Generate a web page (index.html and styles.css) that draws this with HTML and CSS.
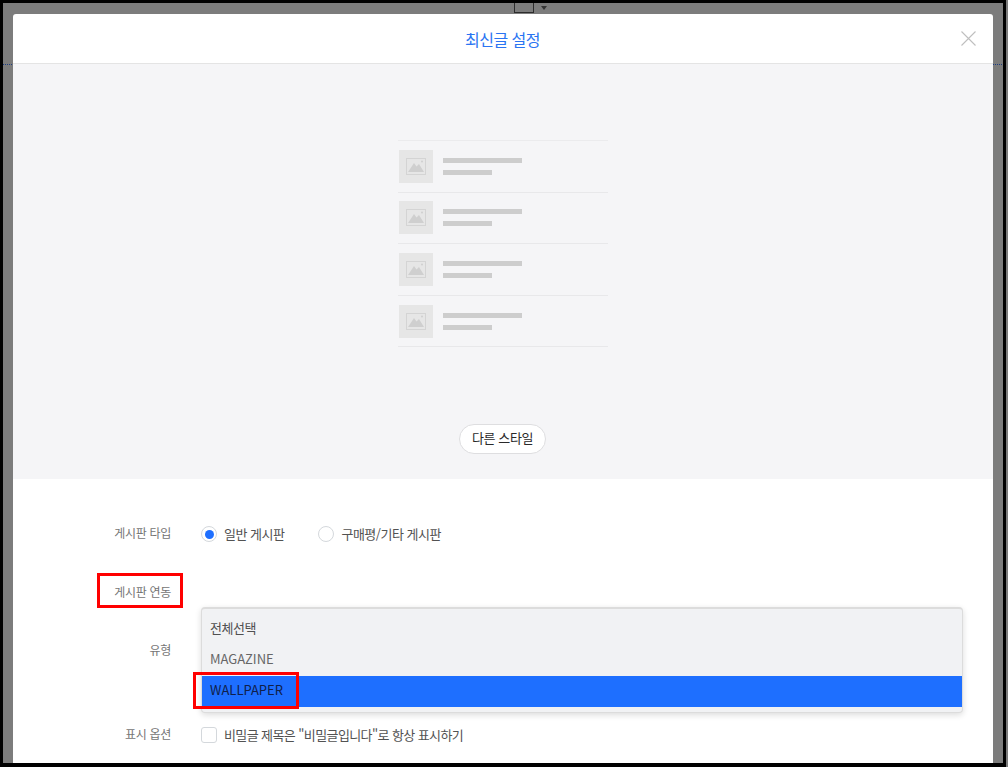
FILE: index.html
```html
<!DOCTYPE html>
<html lang="ko">
<head>
<meta charset="utf-8">
<title>최신글 설정</title>
<link rel="stylesheet" href="styles.css">
</head>
<body>
<div class="shot">
  <div class="toolbar-peek"><span class="peek-box"></span><span class="peek-caret"></span></div>
  <div class="guide"></div>
  <main class="modal">
    <header class="modal-head">
      <h1 class="modal-title">최신글 설정</h1>
      <svg class="close" width="15" height="15" viewBox="0 0 15 15"><path d="M.5.5l14 14M14.500.5l-14 14" fill="none" stroke="#bfbfbf" stroke-width="1.100"/></svg>
    </header>
    <section class="preview">
      <ul class="sample">
        <li class="sample-row"><span class="thumb"><svg width="20" height="17" viewBox="0 0 20 17"><rect x=".5" y=".5" width="19" height="16" fill="none" stroke="#d4d4d4"/><path d="M2 14l6-9 2.500 3.500L13 6l5 8z" fill="#cfcfcf"/><circle cx="16" cy="3.500" r="1" fill="#cfcfcf"/></svg></span><span class="lines"><i class="line long"></i><i class="line short"></i></span></li>
        <li class="sample-row"><span class="thumb"><svg width="20" height="17" viewBox="0 0 20 17"><rect x=".5" y=".5" width="19" height="16" fill="none" stroke="#d4d4d4"/><path d="M2 14l6-9 2.500 3.500L13 6l5 8z" fill="#cfcfcf"/><circle cx="16" cy="3.500" r="1" fill="#cfcfcf"/></svg></span><span class="lines"><i class="line long"></i><i class="line short"></i></span></li>
        <li class="sample-row"><span class="thumb"><svg width="20" height="17" viewBox="0 0 20 17"><rect x=".5" y=".5" width="19" height="16" fill="none" stroke="#d4d4d4"/><path d="M2 14l6-9 2.500 3.500L13 6l5 8z" fill="#cfcfcf"/><circle cx="16" cy="3.500" r="1" fill="#cfcfcf"/></svg></span><span class="lines"><i class="line long"></i><i class="line short"></i></span></li>
        <li class="sample-row"><span class="thumb"><svg width="20" height="17" viewBox="0 0 20 17"><rect x=".5" y=".5" width="19" height="16" fill="none" stroke="#d4d4d4"/><path d="M2 14l6-9 2.500 3.500L13 6l5 8z" fill="#cfcfcf"/><circle cx="16" cy="3.500" r="1" fill="#cfcfcf"/></svg></span><span class="lines"><i class="line long"></i><i class="line short"></i></span></li>
      </ul>
      <button class="style-btn" type="button">다른 스타일</button>
    </section>
    <form class="form">
      <div class="row row-type">
        <div class="label">게시판 타입</div>
        <div class="control options">
          <label class="opt"><span class="radio on"></span>일반 게시판</label>
          <label class="opt"><span class="radio"></span>구매평/기타 게시판</label>
        </div>
      </div>
      <div class="row row-link">
        <div class="label">게시판 연동</div>
      </div>
      <div class="row row-kind">
        <div class="label">유형</div>
      </div>
      <div class="row row-show">
        <div class="label">표시 옵션</div>
        <label class="opt"><span class="check"></span>비밀글 제목은 "비밀글입니다"로 항상 표시하기</label>
      </div>
      <div class="menu">
        <div class="menu-item ko">전체선택</div>
        <div class="menu-item">MAGAZINE</div>
        <div class="menu-item selected">WALLPAPER</div>
      </div>
      <div class="mark mark-label"></div>
      <div class="mark mark-item"></div>
    </form>
  </main>
</div>
</body>
</html>
```
FILE: styles.css
```css
* { box-sizing: border-box; }
html, body { margin: 0; padding: 0; height: 100%; overflow: hidden; }
body {
  width: 1008px;
  height: 767px;
  background: #7c7c7c;
  font-family: "Noto Sans CJK KR", "Noto Sans", sans-serif;
}
.shot {
  position: relative;
  width: 1006px;
  height: 767px;
  border: solid #000;
  border-width: 3px 3px 4px 3px;
  background: #7c7c7c;
  padding: 11px 10px 0 10px;
  overflow: hidden;
}
.toolbar-peek {
  position: absolute;
  left: 511px;
  top: 0;
  display: flex;
  align-items: center;
  gap: 7px;
}
.peek-box {
  width: 20px;
  height: 10px;
  border: 1px solid #2c2c2c;
  border-top: 0;
}
.peek-caret {
  width: 0;
  height: 0;
  border: 3.500px solid transparent;
  border-top: 4px solid #333;
  border-bottom-width: 0;
  margin-top: 0;
}
.guide {
  position: absolute;
  left: 0;
  right: -3px;
  top: 61px;
  border-top: 1px dotted #1d3d80;
}
.modal {
  position: relative;
  width: 980px;
  height: 760px;
  background: #fff;
  border-radius: 3px 3px 0 0;
}
.modal-head {
  position: relative;
  height: 50px;
  border-bottom: 1px solid #e4e4e4;
  display: flex;
  align-items: center;
  justify-content: center;
}
.modal-title {
  margin: 0 1px 0 0;
  font-size: 16px;
  font-weight: 400;
  letter-spacing: -.5px;
  color: #2a74f2;
  line-height: 50px;
}
.close { position: absolute; right: 17px; top: 17px; }
.preview {
  height: 415px;
  background: #f5f5f7;
  position: relative;
  display: flex;
  flex-direction: column;
  align-items: center;
  padding-top: 76px;
}
.sample {
  list-style: none;
  margin: 0;
  padding: 0;
  width: 210px;
  border-top: 1px solid #ebebed;
  filter: blur(.3px);
}
.sample-row {
  height: 51.600px;
  display: flex;
  align-items: center;
  gap: 10px;
  padding-left: 1px;
  border-bottom: 1px solid #e8e8ea;
}
.thumb {
  width: 34px;
  height: 33px;
  background: #e6e6e6;
  display: flex;
  align-items: center;
  justify-content: center;
}
.lines { display: flex; flex-direction: column; gap: 7px; }
.line { display: block; height: 5px; background: #cdcdcd; }
.line.long { width: 79px; }
.line.short { width: 49px; }
.style-btn {
  position: absolute;
  left: 446px;
  top: 360px;
  width: 87px;
  height: 30px;
  padding: 0 0 4px;
  background: #fff;
  border: 1px solid #dedee0;
  border-radius: 15px;
  font: 400 13px "Noto Sans CJK KR", sans-serif;
  letter-spacing: -.4px;
  color: #2a2a2a;
}
.form {
  position: relative;
  padding-top: 45px;
  font-size: 13px;
  color: #525252;
}
.row { display: flex; align-items: flex-start; }
.label {
  width: 158px;
  text-align: right;
  font-size: 12px;
  letter-spacing: -.3px;
  line-height: 18px;
  color: #757575;
}
.row-type { height: 59px; }
.row-link { height: 58px; }
.row-kind { height: 84px; }
.control { display: flex; }
.options { gap: 34px; margin-left: 30px; }
.opt {
  display: flex;
  align-items: center;
  gap: 7px;
  height: 20px;
  line-height: 20px;
  letter-spacing: -.5px;
}
.row-show .opt { margin-left: 30px; letter-spacing: -.6px; }
.radio, .check {
  width: 16px;
  height: 16px;
  border: 1px solid #d4d8dc;
  background: #fff;
  flex: none;
}
.radio { border-radius: 50%; position: relative; }
.radio.on::after {
  content: "";
  position: absolute;
  left: 2.500px;
  top: 2.500px;
  width: 9px;
  height: 9px;
  border-radius: 50%;
  background: #1e6fff;
}
.check { border-radius: 3px; }
.menu {
  position: absolute;
  left: 188px;
  top: 128px;
  width: 762px;
  height: 106px;
  padding-top: 5px;
  background: #f1f2f4;
  border: 1px solid #dcdcdc;
  border-top-width: 2px;
  border-radius: 4px;
  box-shadow: 0 2px 6px rgba(0,0,0,.14);
}
.menu-item {
  height: 31px;
  padding-left: 8px;
  line-height: 28px;
  font-size: 13px;
  color: #666;
}
.menu-item.ko { letter-spacing: -.5px; color: #505050; }
.menu-item.selected { background: #1e6fff; color: #10204a; }
.mark { position: absolute; border: 3px solid #f00; }
.mark-label { left: 84px; top: 94px; width: 86px; height: 35px; }
.mark-item { left: 180px; top: 193px; width: 106px; height: 37px; }
```
